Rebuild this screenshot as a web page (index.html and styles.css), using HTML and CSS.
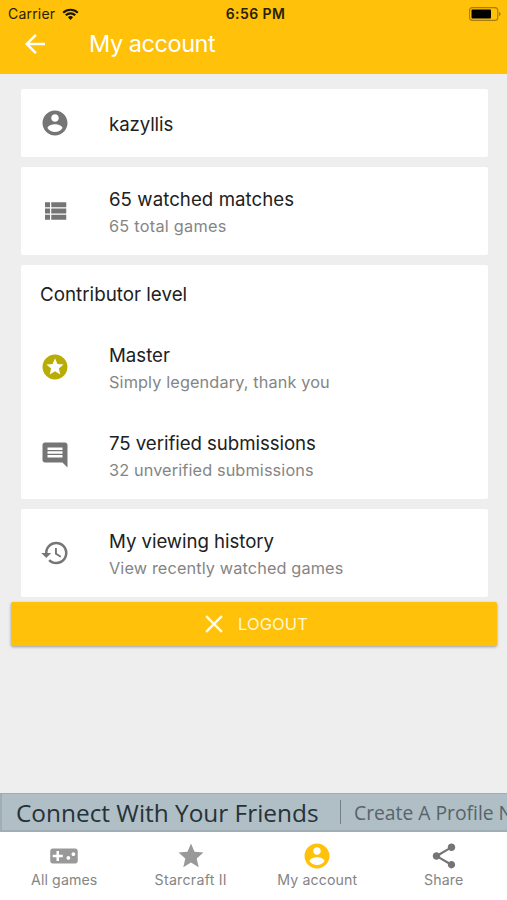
FILE: index.html
```html
<!DOCTYPE html>
<html lang="en">
<head>
<meta charset="utf-8">
<title>My account</title>
<link rel="stylesheet" href="styles.css">
</head>
<body>
<div class="app">
  <header class="header">
    <div class="status">
      <div class="carrier"><span class="carrier-name">Carrier</span>
        <svg class="wifi" viewBox="0 0 17 12"><path d="M1.2 4.7a10.4 10.4 0 0 1 14.6 0M3.8 7.3a6.7 6.7 0 0 1 9.4 0" fill="none" stroke="#1b1500" stroke-width="2.1"/><path d="M8.5 12 5.9 9.3a3.7 3.7 0 0 1 5.2 0z" fill="#1b1500"/></svg>
      </div>
      <span class="time">6:56 PM</span>
      <svg class="battery" viewBox="0 0 32 14"><rect x=".6" y=".6" width="28.2" height="12.8" rx="3" fill="none" stroke="#a67d08" stroke-width="1.1"/><rect x="2.5" y="2.5" width="19.5" height="9" rx="1" fill="#000"/><path d="M30 5c2 .6 2 3.4 0 4z" fill="#a67d08"/></svg>
    </div>
    <div class="titlebar">
      <svg class="icon back" viewBox="0 0 24 24"><path d="M20 11H7.83l5.59-5.59L12 4l-8 8 8 8 1.41-1.41L7.83 13H20v-2z"/></svg>
      <h1 class="title">My account</h1>
    </div>
  </header>

  <main class="content">
    <section class="card">
      <div class="row single">
        <svg class="icon" viewBox="0 0 24 24"><path d="M12 2C6.48 2 2 6.48 2 12s4.48 10 10 10 10-4.48 10-10S17.52 2 12 2zm0 3c1.66 0 3 1.34 3 3s-1.34 3-3 3-3-1.34-3-3 1.34-3 3-3zm0 14.2c-2.5 0-4.71-1.28-6-3.22.03-1.99 4-3.08 6-3.08 1.99 0 5.97 1.09 6 3.08-1.29 1.94-3.5 3.22-6 3.22z"/></svg>
        <div class="text"><span class="primary user">kazyllis</span></div>
      </div>
    </section>
    <section class="card">
      <div class="row">
        <svg class="icon" viewBox="0 0 24 24"><path d="M4 14h4v-4H4v4zm0 5h4v-4H4v4zM4 9h4V5H4v4zm5 5h12v-4H9v4zm0 5h12v-4H9v4zM9 5v4h12V5H9z"/></svg>
        <div class="text"><span class="primary watched">65 watched matches</span><span class="secondary total">65 total games</span></div>
      </div>
    </section>
    <section class="card">
      <h2 class="card-title">Contributor level</h2>
      <div class="row">
        <svg class="icon master" viewBox="0 0 24 24"><path d="M11.99 2C6.47 2 2 6.48 2 12s4.47 10 9.99 10C17.52 22 22 17.52 22 12S17.52 2 11.99 2zm4.24 16L12 15.45 7.77 18l1.12-4.81-3.73-3.23 4.92-.42L12 5l1.92 4.53 4.92.42-3.73 3.23L16.23 18z"/></svg>
        <div class="text"><span class="primary">Master</span><span class="secondary">Simply legendary, thank you</span></div>
      </div>
      <div class="row">
        <svg class="icon" viewBox="0 0 24 24"><path d="M21.99 4c0-1.1-.89-2-1.99-2H4c-1.1 0-2 .9-2 2v12c0 1.1.9 2 2 2h14l4 4-.01-18zM18 14H6v-2h12v2zm0-3H6V9h12v2zm0-3H6V6h12v2z"/></svg>
        <div class="text"><span class="primary verified">75 verified submissions</span><span class="secondary">32 unverified submissions</span></div>
      </div>
    </section>
    <section class="card">
      <div class="row">
        <svg class="icon" viewBox="0 0 24 24"><path d="M13 3a9 9 0 0 0-9 9H1l3.89 3.89.07.14L9 12H6c0-3.87 3.13-7 7-7s7 3.13 7 7-3.13 7-7 7c-1.93 0-3.68-.79-4.94-2.06l-1.42 1.42A8.954 8.954 0 0 0 13 21a9 9 0 0 0 0-18zm-1 5v5l4.28 2.54.72-1.21-3.5-2.08V8H12z"/></svg>
        <div class="text"><span class="primary history">My viewing history</span><span class="secondary">View recently watched games</span></div>
      </div>
    </section>
  </main>

  <button class="logout">
    <svg class="icon" viewBox="0 0 24 24"><path d="M19 6.41L17.59 5 12 10.59 6.41 5 5 6.41 10.59 12 5 17.59 6.41 19 12 13.41 17.59 19 19 17.59 13.41 12z"/></svg>
    <span>LOGOUT</span>
  </button>

  <aside class="banner">
    <span class="banner-main">Connect With Your Friends</span>
    <span class="banner-sub">Create A Profile Now</span>
  </aside>

  <nav class="tabs">
    <a class="tab">
      <svg class="icon" viewBox="0 0 24 24"><path fill-rule="evenodd" d="M21 6H3c-1.100 0-2 .9-2 2v8c0 1.100.9 2 2 2h18c1.100 0 2-.9 2-2V8c0-1.100-.9-2-2-2zm-10 7H8v3H6v-3H3v-2h3V8h2v3h3v2zm4.500 2c-.83 0-1.500-.67-1.500-1.500s.67-1.500 1.500-1.500 1.500.67 1.500 1.500-.67 1.500-1.500 1.500zm4-3c-.83 0-1.500-.67-1.500-1.500S18.670 9 19.500 9s1.500.67 1.500 1.500-.67 1.500-1.500 1.500z"/></svg>
      <span>All games</span>
    </a>
    <a class="tab">
      <svg class="icon" viewBox="0 0 24 24"><path d="M12 17.270L18.180 21l-1.640-7.030L22 9.240l-7.190-.61L12 2 9.190 8.630 2 9.240l5.460 4.730L5.820 21z"/></svg>
      <span class="starcraft">Starcraft II</span>
    </a>
    <a class="tab active">
      <svg class="icon" viewBox="0 0 24 24"><path d="M12 2C6.480 2 2 6.480 2 12s4.480 10 10 10 10-4.480 10-10S17.520 2 12 2zm0 3c1.660 0 3 1.340 3 3s-1.340 3-3 3-3-1.340-3-3 1.340-3 3-3zm0 14.200c-2.500 0-4.710-1.280-6-3.220.03-1.990 4-3.080 6-3.080 1.990 0 5.970 1.090 6 3.080-1.290 1.940-3.500 3.220-6 3.220z"/></svg>
      <span>My account</span>
    </a>
    <a class="tab share">
      <svg class="icon" viewBox="0 0 24 24"><path d="M18 16.080c-.76 0-1.440.3-1.960.77L8.910 12.700c.05-.23.09-.46.09-.7s-.04-.47-.09-.7l7.050-4.110c.54.5 1.250.81 2.040.81 1.660 0 3-1.340 3-3s-1.340-3-3-3-3 1.340-3 3c0 .24.04.47.09.7L8.040 9.810C7.500 9.310 6.790 9 6 9c-1.660 0-3 1.340-3 3s1.340 3 3 3c.79 0 1.500-.31 2.040-.81l7.120 4.160c-.05.21-.08.43-.08.65 0 1.610 1.310 2.920 2.920 2.920s2.920-1.310 2.920-2.920-1.310-2.920-2.920-2.920z"/></svg>
      <span>Share</span>
    </a>
  </nav>
</div>
</body>
</html>
```
FILE: styles.css
```css
* { box-sizing: border-box; }
body { margin: 0; font-family: Inter, Roboto, sans-serif; background: #eeeeee; }
h1, h2 { margin: 0; font-weight: 400; }
.app { width: 507px; height: 900px; display: flex; flex-direction: column; overflow: hidden; }
.icon { width: 30px; height: 30px; fill: #757575; flex: none; display: block; }

.header { height: 74px; flex: none; background: #ffc10a; display: flex; flex-direction: column; }
.status { height: 27px; display: grid; grid-template-columns: 1fr auto 1fr; align-items: center; padding: 0 6px 0 8px; color: #2b2000; font-size: 14px; line-height: 27px; }
.carrier { display: flex; align-items: center; gap: 7px; }
.carrier-name { letter-spacing: 0.2px; }
.wifi { width: 17px; height: 12px; }
.time { font-weight: 600; letter-spacing: 0.4px; padding-left: 2px; }
.battery { width: 32px; height: 14px; justify-self: end; }
.titlebar { height: 34px; display: flex; align-items: center; padding-left: 20px; gap: 39px; }
.back { fill: #fff; }
.title { color: #fff; font-size: 23.5px; line-height: 34px; letter-spacing: -0.45px; }

.content { flex: none; padding: 15px 19px 0 21px; display: flex; flex-direction: column; gap: 10px; }
.card { background: #fff; border-radius: 2px; }
.card-title { height: 58px; padding-left: 19px; font-size: 18.8px; line-height: 60px; color: #212121; }
.row { height: 88px; display: flex; align-items: center; padding-left: 19px; gap: 39px; }
.single { height: 68px; }
.text { display: flex; flex-direction: column; white-space: nowrap; padding-top: 2px; }
.primary { color: #212121; font-size: 18.65px; line-height: 27px; }
.user { letter-spacing: -0.1px; }
.watched { letter-spacing: 0.06px; }
.verified { letter-spacing: -0.05px; }
.history { letter-spacing: -0.05px; }
.secondary { color: #858585; font-size: 16.3px; line-height: 26px; letter-spacing: 0.12px; }
.total { letter-spacing: 0.25px; }
.master { fill: #b8ad05; }

.logout { flex: none; margin: 5px 10px 0 11px; height: 44px; border: 0; border-radius: 2px; background: #ffc10a; box-shadow: 0 1px 3px rgba(0,0,0,.35); color: #fff8cf; font: 400 16.5px/44px Inter, sans-serif; letter-spacing: 0.1px; display: flex; align-items: center; justify-content: center; gap: 9px; padding: 0 1px 0 0; }
.logout .icon { fill: #fffbe2; }

.banner { margin-top: auto; flex: none; height: 39px; display: flex; align-items: center; background: #b0bec5; border: 2px solid #a0adb4; border-top-width: 1px; border-right: 0; padding: 1px 0 0 14px; font-family: "Open Sans", "Noto Sans", sans-serif; white-space: nowrap; }
.banner-main { color: #263238; font-size: 24.4px; line-height: 35px; width: 325px; flex: none; position: relative; }
.banner-main::after { content: ""; position: absolute; right: 0; top: 5px; width: 1px; height: 24px; background: #748188; }
.banner-sub { color: #56646b; font-size: 19.3px; line-height: 35px; margin-left: 13px; }

.tabs { flex: none; height: 68px; display: grid; grid-template-columns: repeat(4, 1fr); background: #fff; padding-left: 1px; }
.tab { display: flex; flex-direction: column; align-items: center; padding-top: 9px; color: #858585; font-size: 14.2px; line-height: 18px; letter-spacing: 0.1px; white-space: nowrap; }
.starcraft { letter-spacing: 0.25px; }
.tab .icon { fill: #999; }
.tab.active .icon { fill: #ffc10a; }
.tab.share .icon { fill: #757575; }
```
